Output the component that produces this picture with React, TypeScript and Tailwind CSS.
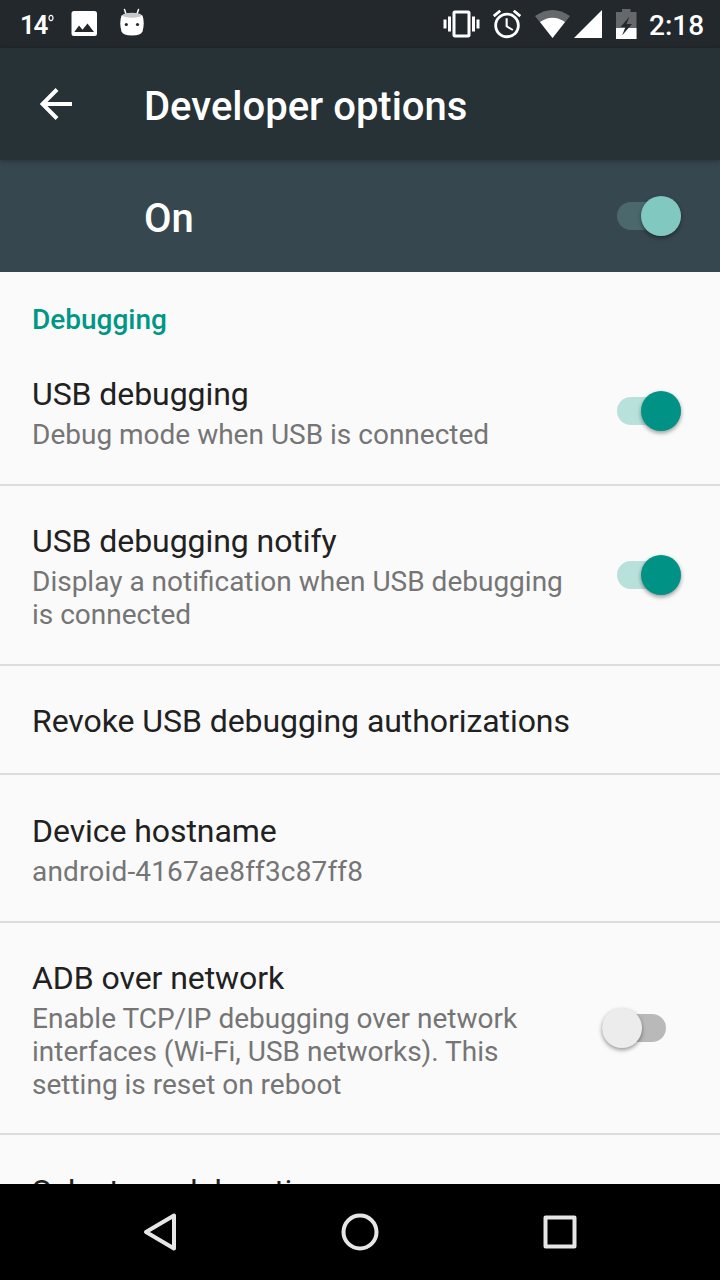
import type { ReactNode } from "react";

type Setting = {
  title: string;
  summary?: string[];
  checked?: boolean;
  // row height, divider included
  height: string;
  tracking?: string;
};

const settings: Setting[] = [
  {
    title: "USB debugging",
    summary: ["Debug mode when USB is connected"],
    checked: true,
    height: "h-[148px]",
  },
  {
    title: "USB debugging notify",
    summary: ["Display a notification when USB debugging", "is connected"],
    checked: true,
    height: "h-[180px]",
  },
  { title: "Revoke USB debugging authorizations", height: "h-[109px]" },
  {
    title: "Device hostname",
    summary: ["android-4167ae8ff3c87ff8"],
    height: "h-[148px]",
    tracking: "tracking-[0.16px]",
  },
  {
    title: "ADB over network",
    summary: [
      "Enable TCP/IP debugging over network",
      "interfaces (Wi-Fi, USB networks). This",
      "setting is reset on reboot",
    ],
    checked: false,
    height: "h-[212px]",
  },
  { title: "Select mock location app", height: "h-[111px]" },
];

function Switch({ checked, onDark }: { checked: boolean; onDark?: boolean }) {
  const track = !checked ? "bg-[#b9b9b9]" : onDark ? "bg-[#4b696d]" : "bg-[#b9e1dc]";
  const thumb = !checked ? "bg-[#ececec]" : onDark ? "bg-[#80c8c0]" : "bg-[#009385]";

  return (
    <div
      role="switch"
      aria-checked={checked}
      className={`flex h-10 w-16 shrink-0 items-center ${checked ? "" : "mr-[15.500px]"}`}
    >
      <div
        className={`flex h-7 w-16 items-center rounded-full ${track} ${checked ? "justify-end" : ""}`}
      >
        <div
          className={`h-10 w-10 shrink-0 rounded-full shadow-[0_2px_4px_rgba(0,0,0,0.4)] ${thumb}`}
        />
      </div>
    </div>
  );
}

function StatusBar() {
  return (
    <div className="flex h-12 shrink-0 items-center justify-between bg-[#23282c] pr-4 pl-5 text-white">
      <div className="flex items-center">
        <span className="flex w-[51px] items-start pt-px text-[26px] leading-none font-semibold tracking-[-1.400px]">
          14
          <svg className="mt-[2px] ml-px" width="6" height="8" viewBox="0 0 6 8" fill="none">
            <ellipse cx="3" cy="4" rx="2" ry="2.700" stroke="currentColor" strokeWidth="1.200" />
          </svg>
        </span>
        <svg width="27" height="28" viewBox="0 0 27 28" fill="currentColor">
          <path
            fillRule="evenodd"
            d="M3 1h20.500a2.500 2.500 0 012.500 2.500v20a2.500 2.500 0 01-2.500 2.500H3A2.500 2.500 0 01.5 23.500v-20A2.500 2.500 0 013 1zM3.300 22H23l-6.500-8.500-5 6.300-3.500-4.200z"
          />
        </svg>
        <svg className="-mt-[3px] ml-[21px]" width="26" height="30" viewBox="0 0 26 30">
          <path d="M7 6L5.500 1.500M18 6L19.500 1.500" stroke="#fff" strokeWidth="1.500" strokeLinecap="round" />
          <path d="M2.500 7.500Q13 3 23.500 7.500Q26 15 23.500 23.500Q22 27.500 13 27.500Q4 27.500 2.500 23.500Q0 15 2.500 7.500Z" fill="#fff" />
          <ellipse cx="13" cy="7.300" rx="9.500" ry="2.500" fill="#c6c8c9" />
          <circle cx="7.300" cy="16.500" r="1.600" fill="#23282c" />
          <circle cx="18.500" cy="16.500" r="1.600" fill="#23282c" />
        </svg>
      </div>
      <div className="flex items-center">
        <svg width="37" height="36" viewBox="0 0 24 24" fill="currentColor">
          <path d="M0 15h2V9H0v6zm3 2h2V7H3v10zm19-8v6h2V9h-2zm-3 8h2V7h-2v10zM16.500 3h-9C6.670 3 6 3.670 6 4.500v15c0 .83.67 1.500 1.500 1.500h9c.83 0 1.500-.67 1.500-1.500v-15c0-.83-.67-1.500-1.500-1.500zM16 19H8V5h8v14z" />
        </svg>
        <svg className="ml-2.5" width="34" height="34" viewBox="0 0 24 24" fill="currentColor">
          <path d="M22 5.720l-4.600-3.860-1.290 1.530 4.600 3.860L22 5.720zM7.880 3.390L6.600 1.860 2 5.710l1.290 1.530 4.590-3.850zM12.500 8H11v6l4.750 2.850.75-1.230-4-2.370V8zM12 4c-4.970 0-9 4.030-9 9s4.020 9 9 9a9 9 0 000-18zm0 16c-3.870 0-7-3.130-7-7s3.130-7 7-7 7 3.130 7 7-3.130 7-7 7z" />
        </svg>
        <svg className="ml-[11px]" width="35" height="28" viewBox="0 0 35 28">
          <path d="M0 6Q17.500-6 35 6L17.500 28Z" fill="#66696c" />
          <path d="M5 12Q17.500 3.500 30 12L17.500 28Z" fill="#fff" />
        </svg>
        <svg className="ml-[4px]" width="28" height="28" viewBox="0 0 28 28" fill="currentColor">
          <path d="M28 0v28H0z" />
        </svg>
        <svg className="ml-[14px]" width="21" height="30" viewBox="0 0 21 30">
          <path d="M0 3h6V0h8.500v3H20.500v27H0z" fill="#66696c" />
          <path d="M0 19h20.500v11H0z" fill="#fff" />
          <path d="M13.500 7.500L4.500 18H9.500L6 26.500L16 15H10.500Z" fill="#23282c" />
        </svg>
        <span className="ml-3 w-[55px] pt-[3px] text-[28px] leading-none font-medium whitespace-nowrap">
          2:18
        </span>
      </div>
    </div>
  );
}

function SettingRow({ title, summary, checked, height, tracking = "" }: Setting) {
  return (
    <div
      className={`flex shrink-0 items-center justify-between border-b-2 border-[#dcdcdc] pr-[39px] pl-8 ${height}`}
    >
      <div className="pt-[3px]">
        <h2 className="text-[32px] leading-[38px] tracking-[-0.07px] whitespace-nowrap text-[#212121]">
          {title}
        </h2>
        {summary && (
          <p
            className={`mt-[5px] text-[28px] leading-[33px] whitespace-nowrap text-[#757575] ${tracking}`}
          >
            {summary.map((line) => (
              <span key={line} className="block">
                {line}
              </span>
            ))}
          </p>
        )}
      </div>
      {checked !== undefined && <Switch checked={checked} />}
    </div>
  );
}

function NavButton({ label, children }: { label: string; children: ReactNode }) {
  return (
    <button aria-label={label} className="flex w-[200px] items-center justify-center">
      <svg
        width="40"
        height="40"
        viewBox="0 0 40 40"
        fill="none"
        stroke="#e6e6e6"
        strokeWidth="4"
        strokeLinejoin="round"
      >
        {children}
      </svg>
    </button>
  );
}

export default function App() {
  return (
    <div className="flex h-[1280px] w-[720px] flex-col overflow-hidden bg-[#fafafa] font-[Roboto,'Liberation_Sans',sans-serif]">
      <StatusBar />

      <header className="z-10 flex h-28 shrink-0 items-center bg-[#273237] pl-10 text-white shadow-[0_1px_5px_rgba(0,0,0,0.3)]">
        <svg width="32" height="32" viewBox="0 0 32 32" fill="none" stroke="currentColor" strokeWidth="4">
          <path d="M32 16H3M17 1.500L2.500 16L17 30.500" />
        </svg>
        <h1 className="ml-[72px] pt-1.5 text-[40px] leading-none font-medium">Developer options</h1>
      </header>

      <div className="flex h-28 shrink-0 items-center justify-between bg-[#37474f] pr-[39px] pl-36 text-white">
        <span className="pt-1.5 text-[40px] leading-none font-medium">On</span>
        <Switch checked onDark />
      </div>

      <main className="flex min-h-0 flex-1 flex-col overflow-hidden">
        <h3 className="h-[66px] shrink-0 pt-[31px] pl-8 text-[28px] leading-[33px] font-medium text-[#009688]">
          Debugging
        </h3>
        {settings.map((setting) => (
          <SettingRow key={setting.title} {...setting} />
        ))}
      </main>

      <nav className="flex h-24 shrink-0 justify-center bg-black">
        <NavButton label="Back">
          <path d="M34 3.500V36.500L6 20Z" />
        </NavButton>
        <NavButton label="Home">
          <circle cx="20" cy="20" r="16.500" />
        </NavButton>
        <NavButton label="Overview">
          <rect x="5.500" y="5.500" width="29" height="29" />
        </NavButton>
      </nav>
    </div>
  );
}
